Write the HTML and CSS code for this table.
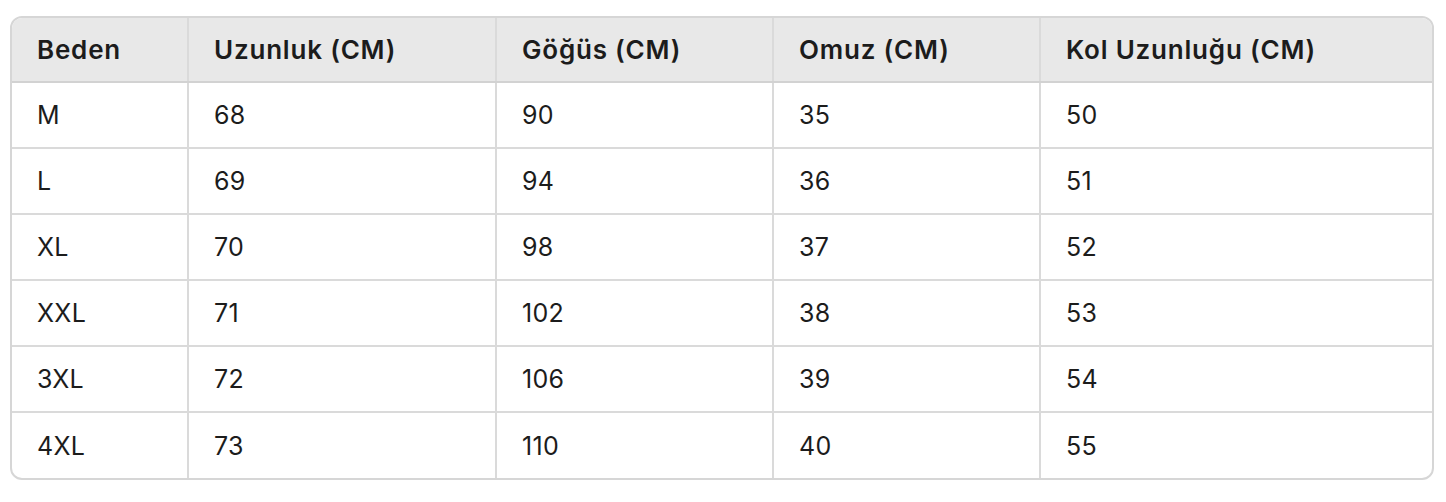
FILE: index.html
```html
<!DOCTYPE html>
<html lang="tr">
<head>
<meta charset="utf-8">
<link rel="stylesheet" href="styles.css">
</head>
<body>
<div class="wrap">
<table class="size-table">
<colgroup>
<col class="c1"><col class="c2"><col class="c3"><col class="c4"><col class="c5">
</colgroup>
<thead>
<tr><th>Beden</th><th>Uzunluk (CM)</th><th>Göğüs (CM)</th><th>Omuz (CM)</th><th>Kol Uzunluğu (CM)</th></tr>
</thead>
<tbody>
<tr><td>M</td><td>68</td><td>90</td><td>35</td><td>50</td></tr>
<tr><td>L</td><td>69</td><td>94</td><td>36</td><td>51</td></tr>
<tr><td>XL</td><td>70</td><td>98</td><td>37</td><td>52</td></tr>
<tr><td>XXL</td><td>71</td><td>102</td><td>38</td><td>53</td></tr>
<tr><td>3XL</td><td>72</td><td>106</td><td>39</td><td>54</td></tr>
<tr><td>4XL</td><td>73</td><td>110</td><td>40</td><td>55</td></tr>
</tbody>
</table>
</div>
</body>
</html>
```
FILE: styles.css
```css
html, body {
  margin: 0;
  background: #ffffff;
}
body {
  padding: 16px 12px 0 10px;
  font-family: Inter, "Noto Sans", sans-serif;
  color: #1c1c1c;
}
.wrap {
  width: 1424px;
  box-sizing: border-box;
  border: 2px solid #d6d6d6;
  border-radius: 12px;
  overflow: hidden;
}
.size-table {
  width: 100%;
  border-collapse: collapse;
  table-layout: fixed;
}
.c1 { width: 176px; }
.c2 { width: 308px; }
.c3 { width: 277px; }
.c4 { width: 267px; }
.c5 { width: auto; }
.size-table th,
.size-table td {
  height: 66px;
  padding: 0 0 0 25px;
  text-align: left;
  vertical-align: middle;
  border-left: 2px solid #dadada;
  border-top: 2px solid #dadada;
  box-sizing: border-box;
}
.size-table th:first-child,
.size-table td:first-child {
  border-left: none;
}
.size-table thead th {
  height: 64px;
  border-top: none;
  background: #e8e8e8;
  font-size: 26px;
  font-weight: 600;
  letter-spacing: 0.8px;
  border-bottom: 2px solid #d2d2d2;
}
.size-table td {
  font-size: 25px;
  font-weight: 400;
  letter-spacing: 0.3px;
}
```
